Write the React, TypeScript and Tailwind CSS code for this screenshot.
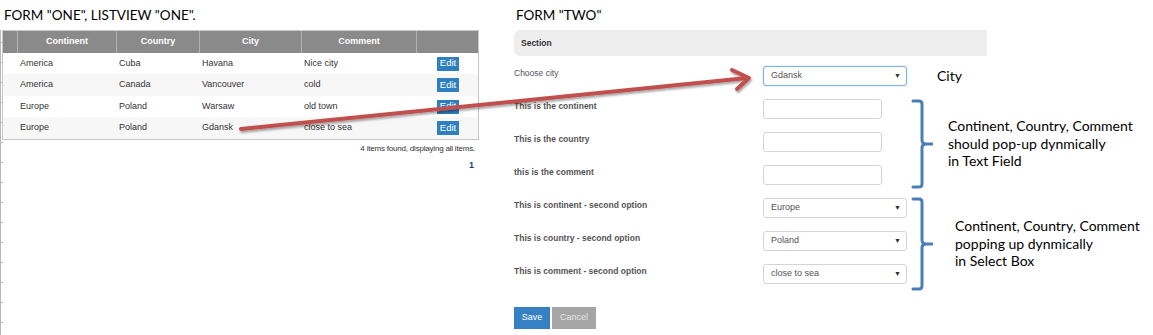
const rows = [
  { continent: "America", country: "Cuba", city: "Havana", comment: "Nice city" },
  { continent: "America", country: "Canada", city: "Vancouver", comment: "cold" },
  { continent: "Europe", country: "Poland", city: "Warsaw", comment: "old town" },
  { continent: "Europe", country: "Poland", city: "Gdansk", comment: "close to sea" },
];

const cols = "grid grid-cols-[15px_99px_83px_102px_115px_1fr]";

function Select({ value, focused }: { value: string; focused?: boolean }) {
  return (
    <div
      className={
        "relative flex h-[20px] w-[144px] items-center rounded-[3px] border bg-white pl-[7px] text-[9px] text-[#555] " +
        (focused ? "border-[#7fb2e6] shadow-[0_0_2px_#b5d3f3]" : "border-[#d4d4d4]")
      }
    >
      {value}
      <span className="absolute right-[5px] top-[5px] text-[7px] leading-none text-[#333]">▼</span>
    </div>
  );
}

function TextInput() {
  return <div className="h-[20px] w-[119px] rounded-[3px] border border-[#d4d4d4] bg-white" />;
}

function Bracket({ h }: { h: number }) {
  const m = h / 2;
  return (
    <svg width="26" height={h} viewBox={`0 0 26 ${h}`} className="shrink-0">
      <path
        d={`M6 2 H12 Q15 2 15 5 V${m - 4} Q15 ${m} 19 ${m} H25 M19 ${m} Q15 ${m} 15 ${m + 4} V${h - 5} Q15 ${h - 2} 12 ${h - 2} H6`}
        fill="none"
        stroke="#4a7ebb"
        strokeWidth="3"
        strokeLinecap="round"
      />
    </svg>
  );
}

function FormRow({ label, bold = true, children }: { label: string; bold?: boolean; children: React.ReactNode }) {
  return (
    <div className="flex h-[20px] items-start">
      <div className={"w-[249px] pt-[1px] text-[8.5px] leading-[12px] text-[#555] " + (bold ? "font-bold" : "")}>{label}</div>
      {children}
    </div>
  );
}

export default function App() {
  return (
    <div className="relative flex h-[335px] w-[1153px] overflow-hidden bg-white font-['Liberation_Sans',Arial,sans-serif]">
      {/* left: listview */}
      <div className="w-[480px] shrink-0">
        <div className="flex h-[30px] items-center pl-[4px] font-['Lato',sans-serif] text-[13.5px] text-black">
          FORM "ONE", LISTVIEW "ONE".
        </div>
        <div className="flex">
          <div className="flex w-[2px] flex-col border-l border-[#b8b8b8]">
            {Array.from({ length: 16 }).map((_, i) => (
              <div key={i} className="h-[20px] w-[2px] border-b border-[#b8b8b8] first:h-[13px]" />
            ))}
          </div>
          <div className="w-[477px]">
            <div className="border border-[#c6c6c6]">
              <div className={cols + " h-[22px] bg-[#8a8a8a] text-[9px] font-bold text-white"}>
                {["", "Continent", "Country", "City", "Comment", ""].map((h, i) => (
                  <div key={i} className="flex items-center justify-center border-r border-[#b3b3b3] last:border-r-0">
                    {h}
                  </div>
                ))}
              </div>
              {rows.map((r, i) => (
                <div
                  key={i}
                  className={cols + " text-[9px] text-[#333] " + (i % 2 === 1 ? "h-[22px] bg-[#f7f7f7]" : "h-[21px] bg-white")}
                >
                  <div />
                  <div className="flex items-center pl-[2px]">{r.continent}</div>
                  <div className="flex items-center pl-[2px]">{r.country}</div>
                  <div className="flex items-center pl-[2px]">{r.city}</div>
                  <div className="flex items-center pl-[2px]">{r.comment}</div>
                  <div className="flex items-center pl-[20px]">
                    <span className="flex h-[14px] w-[22px] items-center justify-center bg-[#2e7fc0] text-[9.5px] text-white">
                      Edit
                    </span>
                  </div>
                </div>
              ))}
            </div>
            <div className="pr-[4px] pt-[3px] text-right text-[8px] leading-[12px] tracking-[-0.2px] text-[#333]">
              4 items found, displaying all items.
            </div>
            <div className="pr-[5px] pt-[4px] text-right text-[9px] font-bold leading-[12px] text-[#23416b]">1</div>
          </div>
        </div>
      </div>

      {/* right: form */}
      <div className="ml-[34px] flex-1">
        <div className="flex h-[30px] items-center pl-[2px] font-['Lato',sans-serif] text-[13.5px] text-black">FORM "TWO"</div>
        <div className="flex h-[26px] w-[473px] items-center rounded-l-[6px] bg-[#eeeeee] pl-[7px] text-[8.5px] font-bold text-[#333]">
          Section
        </div>
        <div className="flex">
          <div className="flex w-[393px] flex-col gap-[13px] pt-[10px]">
            <FormRow label="Choose city" bold={false}>
              <Select value="Gdansk" focused />
            </FormRow>
            <FormRow label="This is the continent">
              <TextInput />
            </FormRow>
            <FormRow label="This is the country">
              <TextInput />
            </FormRow>
            <FormRow label="this is the comment">
              <TextInput />
            </FormRow>
            <FormRow label="This is continent - second option">
              <Select value="Europe" />
            </FormRow>
            <FormRow label="This is country - second option">
              <Select value="Poland" />
            </FormRow>
            <FormRow label="This is comment - second option">
              <Select value="close to sea" />
            </FormRow>
            <div className="mt-[10px] flex gap-[2px]">
              <span className="flex h-[22px] w-[36px] items-center justify-center bg-[#3581c3] text-[9px] text-white">Save</span>
              <span className="flex h-[22px] w-[44px] items-center justify-center bg-[#a5a5a5] text-[9px] text-[#e6e6e6]">Cancel</span>
            </div>
          </div>

          {/* annotations */}
          <div className="flex flex-col font-['Lato',sans-serif] text-[14px] leading-[17.5px] text-black">
            <div className="mt-[11px] pl-[30px] text-[14px]">City</div>
            <div className="mt-[14px] flex items-center">
              <Bracket h={90} />
              <div className="ml-[15px]">
                Continent, Country, Comment
                <br />
                should pop-up dynmically
                <br />
                in Text Field
              </div>
            </div>
            <div className="mt-[8px] flex items-center">
              <Bracket h={94} />
              <div className="ml-[22px]">
                Continent, Country, Comment
                <br />
                popping up dynmically
                <br />
                in Select Box
              </div>
            </div>
          </div>
        </div>
      </div>

      {/* red arrow drawn over both forms */}
      <svg className="pointer-events-none absolute inset-0" width="1153" height="335" viewBox="0 0 1153 335">
        <defs>
          <filter id="sh" x="-5%" y="-50%" width="110%" height="200%">
            <feDropShadow dx="1" dy="2" stdDeviation="1.2" floodColor="#000" floodOpacity="0.35" />
          </filter>
        </defs>
        <g filter="url(#sh)" stroke="#c0504d" strokeWidth="4" fill="none" strokeLinecap="round" strokeLinejoin="round">
          <path d="M241 129 L747 78" />
          <path d="M732 70 L749 78 L737 89" />
        </g>
      </svg>
    </div>
  );
}
